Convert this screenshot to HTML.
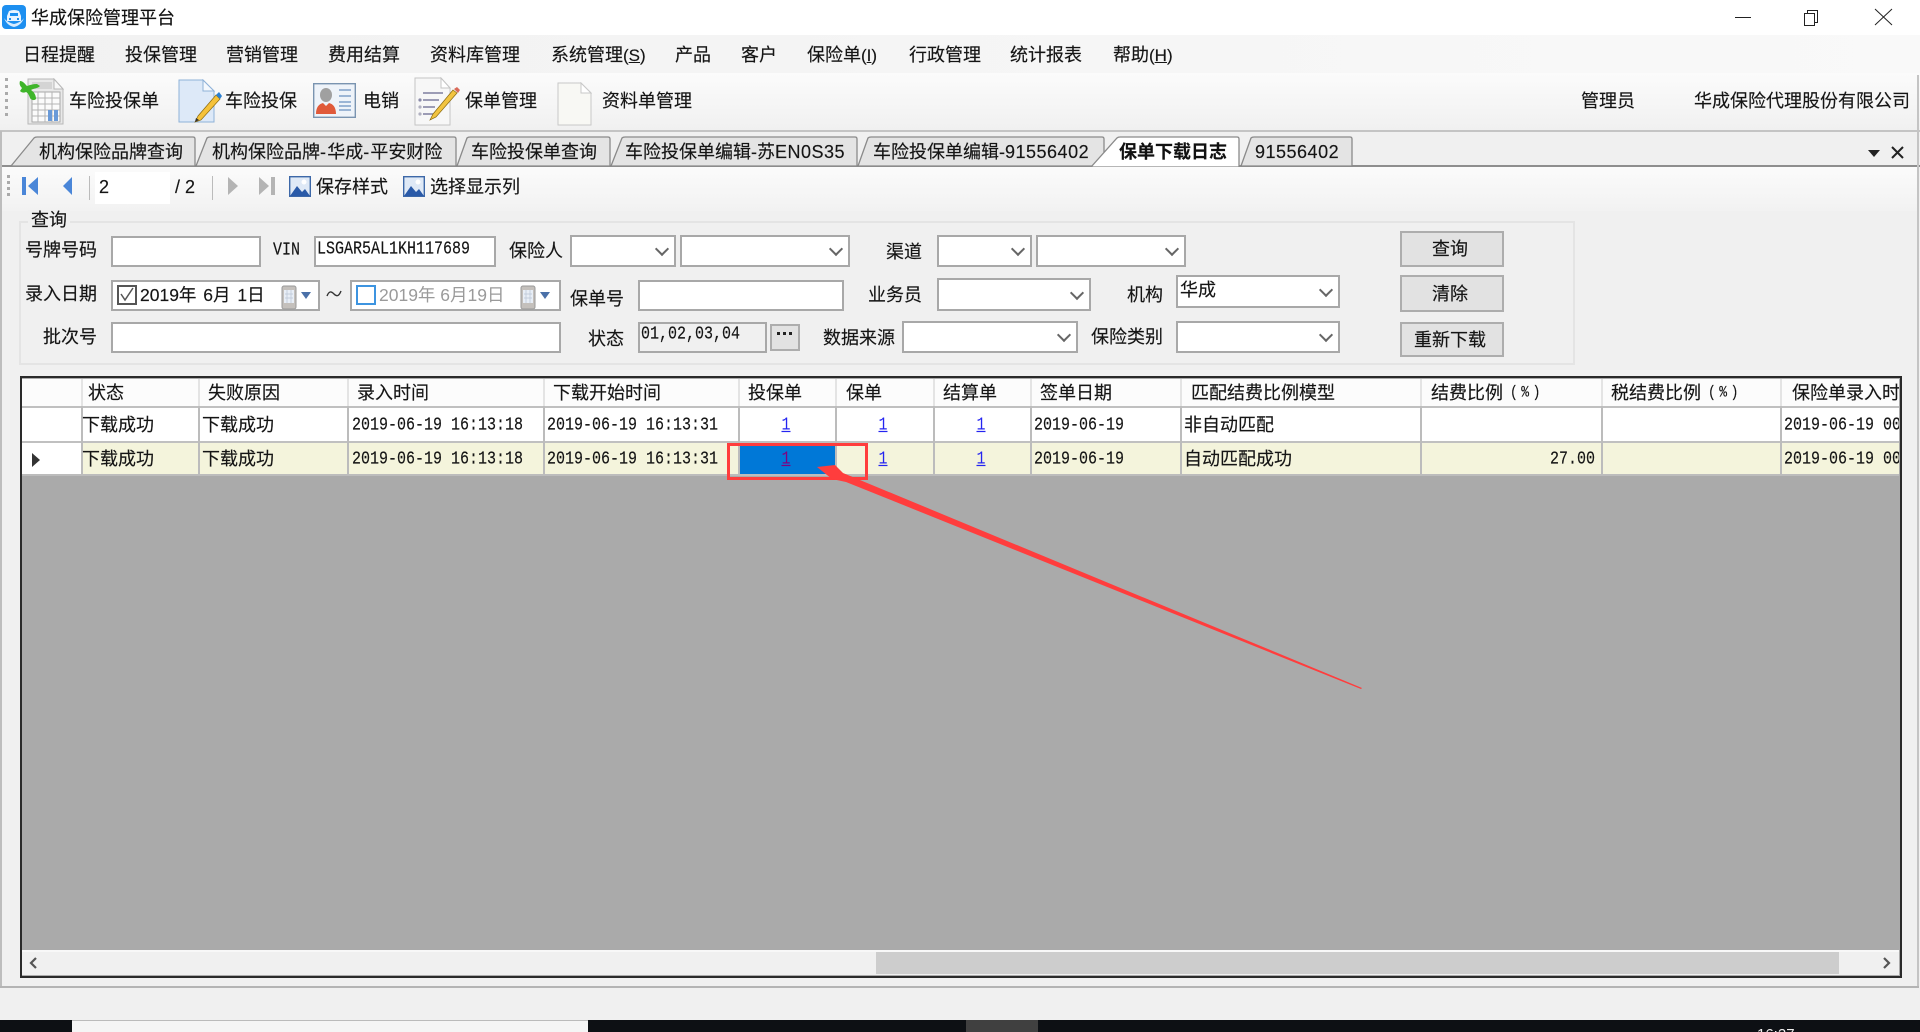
<!DOCTYPE html>
<html lang="zh">
<head>
<meta charset="utf-8">
<title>华成保险管理平台</title>
<style>
html,body{margin:0;padding:0;width:1920px;height:1032px;overflow:hidden;background:#f0f0f0}
#r{position:absolute;left:0;top:0;width:1920px;height:1032px;overflow:hidden;background:#f0f0f0;font-family:"Liberation Sans","Noto Sans CJK SC",sans-serif;font-size:18px;color:#151515;filter:blur(.35px)}
#r div,#r span,#r svg{position:absolute}
.t{white-space:nowrap;line-height:24px;height:24px;-webkit-text-stroke:.15px #151515}
.m{font-family:"Liberation Mono","Noto Sans CJK SC",monospace;font-size:15px;white-space:nowrap;line-height:20px;height:20px;color:#151515;transform:scaleY(1.22);-webkit-text-stroke:.15px #151515}
.i{background:#fff;border:2px solid #a8a8a8;box-sizing:border-box}
.c{background:#fff;border:2px solid #a8a8a8;box-sizing:border-box}
.c:after{content:"";position:absolute;right:7px;top:50%;margin-top:-7px;width:8px;height:8px;border-right:2px solid #666;border-bottom:2px solid #666;transform:rotate(45deg)}
.b{background:#e2e2e2;border:2px solid #adadad;box-sizing:border-box}
.vh{width:2px;background:#e4e4e4;top:379px;height:27px}
.v{width:2px;background:#bcbcbc;top:406px;height:69px}
.u{text-decoration:underline;color:#2424f0;text-align:center;width:20px;-webkit-text-stroke:0}
b{font-weight:normal}
.n{letter-spacing:.5px}
.h{letter-spacing:1.2px}
.p{font-size:17px}
</style>
</head>
<body>
<div id="r">
<!-- title bar -->
<div style="left:0;top:0;width:1920px;height:35px;background:#fff"></div>
<svg style="left:2px;top:5px" width="24" height="24" viewBox="0 0 24 24"><rect width="24" height="24" rx="4" fill="#1d8ff0"/><path d="M2 13c2 5 5 8 10 9 5-1 8-4 10-9-2 3-6 5-10 6-4-1-8-3-10-6z" fill="#d8ecff"/><path d="M7 6q5-2 10 0l2 5v5H5v-5z" fill="#e8f3ff"/><rect x="8" y="8" width="8" height="3" fill="#1d8ff0"/><rect x="7" y="13" width="2" height="2" fill="#1d8ff0"/><rect x="15" y="13" width="2" height="2" fill="#1d8ff0"/></svg>
<span class="t" style="left:31px;top:6px;color:#111">华成保险管理平台</span>
<svg style="left:1730px;top:5px" width="180" height="24" viewBox="0 0 180 24" fill="none" stroke="#222" stroke-width="1"><path d="M5 12.500h16"/><path d="M74.500 8.500h10v12h-10zM77.500 8.500v-3h10v12h-3"/><path d="M145 4l17 16M162 4l-17 16"/></svg>

<!-- menu -->
<div style="left:0;top:35px;width:1920px;height:38px;background:linear-gradient(90deg,#f1f1f1,#f6f6f6 60%,#f9f9f9)"></div>
<span class="t" style="left:23px;top:43px">日程提醒</span>
<span class="t" style="left:125px;top:43px">投保管理</span>
<span class="t" style="left:226px;top:43px">营销管理</span>
<span class="t" style="left:328px;top:43px">费用结算</span>
<span class="t" style="left:430px;top:43px">资料库管理</span>
<span class="t" style="left:551px;top:43px">系统管理<b class="p">(<u>S</u>)</b></span>
<span class="t" style="left:675px;top:43px">产品</span>
<span class="t" style="left:741px;top:43px">客户</span>
<span class="t" style="left:807px;top:43px">保险单<b class="p">(<u>I</u>)</b></span>
<span class="t" style="left:909px;top:43px">行政管理</span>
<span class="t" style="left:1010px;top:43px">统计报表</span>
<span class="t" style="left:1113px;top:43px">帮助<b class="p">(<u>H</u>)</b></span>

<!-- toolbar 1 -->
<div style="left:0;top:73px;width:1920px;height:59px;background:linear-gradient(#fbfbfb,#f5f5f5 60%,#f0f0f0);border-bottom:2px solid #c4c4c4;box-sizing:border-box"></div>
<div style="left:5px;top:78px;width:3px;height:40px;background:repeating-linear-gradient(#aaa 0 3px,transparent 3px 7px)"></div>
<svg style="left:18px;top:78px" width="46" height="48" viewBox="0 0 46 48"><path d="M10 1h26l9 10v35H10z" fill="#e9e9e9" stroke="#b8b8b8"/><path d="M36 1v10h9z" fill="#f8f8f8" stroke="#b8b8b8"/><rect x="14" y="4" width="20" height="7" fill="#d4d4d4"/><path d="M14 14h28v30H14z" fill="#fbfbfb" stroke="#a8a8a8"/><path d="M14 20h28M14 26h28M14 32h28M14 38h28M20 14v30M27 14v30M34 14v30" stroke="#b4b4b4" fill="none"/><path d="M2 3c3 0 5 3 7 5 3-1 6-2 10-2l3 2c-3 3-6 2-9 4 3 2 5 5 5 9-2 2-5 1-6-1-1-3-2-5-4-6-2 1-4 1-6-1l2-3C2 8 1 6 2 3z" fill="#3fb52a"/><rect x="30" y="32" width="4" height="11" fill="#6a9ad8"/><rect x="36" y="32" width="4" height="11" fill="#6a9ad8"/></svg>
<span class="t" style="left:69px;top:89px">车险投保单</span>
<svg style="left:178px;top:79px" width="44" height="45" viewBox="0 0 44 45"><path d="M1 1h24l11 11v31H1z" fill="#dde9f8" stroke="#8fb2d8"/><path d="M25 1v11h11z" fill="#f4f8fd" stroke="#8fb2d8"/><path d="M20 37l-3 6 6-2 19-21-4-4z" fill="#f5c23a" stroke="#8a6a10" stroke-width=".7"/><path d="M38 16l4 4 2-3-3-4z" fill="#2a7fd0"/><path d="M17 43l1-4 3 2z" fill="#333"/></svg>
<span class="t" style="left:225px;top:89px">车险投保</span>
<svg style="left:313px;top:83px" width="43" height="35" viewBox="0 0 43 35"><rect x=".7" y=".7" width="41.600" height="33.600" fill="#eef3f9" stroke="#7a94b0" stroke-width="1.400"/><ellipse cx="13" cy="12" rx="6" ry="7" fill="#a0a0a0"/><path d="M3 31c0-7 3-10 7-11l3 3 3-3c4 1 7 4 7 11z" fill="#e05a3a"/><path d="M26 7h12M26 13h12M26 19h12M26 23h12M26 27h12" stroke="#6a90c0" stroke-width="1.300"/></svg>
<span class="t" style="left:363px;top:89px">电销</span>
<svg style="left:414px;top:77px" width="47" height="49" viewBox="0 0 47 49"><path d="M1 1h26l9 10v37H1z" fill="#f7f7f7" stroke="#c4c4c4"/><path d="M27 1v10h9z" fill="#fff" stroke="#c4c4c4"/><path d="M9 16h20M9 23h16M9 30h12M9 37h10" stroke="#9090ac" stroke-width="1.800"/><circle cx="6" cy="23" r="1.600" fill="#8a8aa8"/><circle cx="6" cy="30" r="1.600" fill="#b0b0c0"/><circle cx="6" cy="37" r="1.600" fill="#b0b0c0"/><path d="M19 37l-3 6 6-3 21-24-4-3z" fill="#f2c440" stroke="#8a6a10" stroke-width=".7"/><path d="M40 12l4 4 2-3-3-3z" fill="#d96a5a"/></svg>
<span class="t" style="left:465px;top:89px">保单管理</span>
<svg style="left:557px;top:82px" width="35" height="44" viewBox="0 0 35 44"><path d="M1 1h23l10 10v32H1z" fill="#f8f8f4" stroke="#c8c8c8"/><path d="M24 1v10h10z" fill="#fff" stroke="#c8c8c8"/></svg>
<span class="t" style="left:602px;top:89px">资料单管理</span>
<span class="t" style="left:1581px;top:89px">管理员</span>
<span class="t" style="left:1694px;top:89px">华成保险代理股份有限公司</span>

<!-- tabs -->
<div style="left:0;top:132px;width:1920px;height:35px;background:#f0f0f0;border-bottom:2px solid #8e8e8e;box-sizing:border-box"></div>
<svg style="left:0;top:131px" width="1400" height="36" viewBox="0 0 1400 36" fill="#e4e4e4" stroke="#8a8a8a" stroke-width="1.300">
<path d="M11 35L34 7q1-1 3-1H193q2 0 2 2V35z"/>
<path d="M196 35L207 7q1-1 3-1H454q2 0 2 2V35z"/>
<path d="M457 35L467 7q1-1 3-1H608q2 0 2 2V35z"/>
<path d="M611 35L622 7q1-1 3-1H855q2 0 2 2V35z"/>
<path d="M858 35L868 7q1-1 3-1H1102q2 0 2 2V35z"/>
<path d="M1241 35L1251 7q1-1 3-1H1350q2 0 2 2V35z"/>
<path d="M1091 36L1117 7q1-1 3-1H1237q2 0 2 2V36z" fill="#fff"/>
</svg>
<span class="t" style="left:39px;top:140px">机构保险品牌查询</span>
<span class="t" style="left:212px;top:140px">机构保险品牌<b class="h">-</b>华成<b class="h">-</b>平安财险</span>
<span class="t" style="left:471px;top:140px">车险投保单查询</span>
<span class="t" style="left:625px;top:140px">车险投保单编辑-苏<b class="n">EN0S35</b></span>
<span class="t" style="left:873px;top:140px">车险投保单编辑-<b class="n">91556402</b></span>
<span class="t" style="left:1119px;top:140px;font-weight:700;color:#111">保单下载日志</span>
<span class="t" style="left:1255px;top:140px"><b class="n">91556402</b></span>
<svg style="left:1866px;top:145px" width="44" height="16" viewBox="0 0 44 16"><path d="M2 5h12l-6 7z" fill="#222"/><path d="M26 2l11 11M37 2L26 13" stroke="#222" stroke-width="2" fill="none"/></svg>

<!-- toolbar 2 -->
<div style="left:2px;top:167px;width:1916px;height:44px;background:linear-gradient(#fbfbfb,#f2f2f2)"></div>
<div style="left:7px;top:175px;width:3px;height:22px;background:repeating-linear-gradient(#aaa 0 3px,transparent 3px 6px)"></div>
<svg style="left:20px;top:175px" width="60" height="22" viewBox="0 0 60 22"><rect x="2" y="2" width="4" height="18" fill="#4a86d8"/><path d="M18 2v18L8 11z" fill="#4a86d8"/><path d="M52 2v18L43 11z" fill="#4a86d8"/></svg>
<div style="left:89px;top:176px;width:1px;height:24px;background:#bbb"></div>
<div style="left:95px;top:172px;width:75px;height:32px;background:#fff"></div>
<span class="t" style="left:99px;top:175px">2</span>
<span class="t" style="left:175px;top:175px">/ 2</span>
<div style="left:212px;top:176px;width:1px;height:24px;background:#bbb"></div>
<svg style="left:226px;top:175px" width="52" height="22" viewBox="0 0 52 22"><path d="M2 2v18l10-9z" fill="#b4b4b4"/><path d="M33 2v18l10-9z" fill="#b4b4b4"/><rect x="45" y="2" width="4" height="18" fill="#b4b4b4"/></svg>
<svg style="left:289px;top:176px" width="22" height="21" viewBox="0 0 22 21"><rect x=".7" y=".7" width="20.600" height="19.600" fill="#dfe9f6" stroke="#3d68a8" stroke-width="1.400"/><path d="M1 20l7-10 5 6 3-3 5 7z" fill="#2a5aa8"/><circle cx="15" cy="6" r="2.500" fill="#fff"/></svg>
<span class="t" style="left:316px;top:175px">保存样式</span>
<svg style="left:403px;top:176px" width="22" height="21" viewBox="0 0 22 21"><rect x=".7" y=".7" width="20.600" height="19.600" fill="#dfe9f6" stroke="#3d68a8" stroke-width="1.400"/><path d="M1 20l7-10 5 6 3-3 5 7z" fill="#2a5aa8"/><circle cx="15" cy="6" r="2.500" fill="#fff"/></svg>
<span class="t" style="left:430px;top:175px">选择显示列</span>

<!-- outer panel lines -->
<div style="left:0;top:131px;width:2px;height:857px;background:#bdbdbd"></div>
<div style="left:1917px;top:75px;width:2px;height:913px;background:#c4c4c4"></div>
<div style="left:0;top:986px;width:1919px;height:2px;background:#b4b4b4"></div>

<!-- query group -->
<div style="left:19px;top:221px;width:1556px;height:144px;border:2px solid #e4e4e4;box-sizing:border-box"></div>
<div style="left:28px;top:210px;width:42px;height:20px;background:#f0f0f0"></div>
<span class="t" style="left:31px;top:208px">查询</span>

<span class="t" style="left:25px;top:238px">号牌号码</span>
<div class="i" style="left:111px;top:236px;width:150px;height:31px"></div>
<span class="m" style="left:273px;top:241px">VIN</span>
<div class="i" style="left:314px;top:236px;width:182px;height:31px"></div>
<span class="m" style="left:317px;top:240px">LSGAR5AL1KH117689</span>
<span class="t" style="left:509px;top:239px">保险人</span>
<div class="c" style="left:570px;top:235px;width:106px;height:32px"></div>
<div class="c" style="left:680px;top:235px;width:170px;height:32px"></div>
<span class="t" style="left:886px;top:240px">渠道</span>
<div class="c" style="left:937px;top:235px;width:95px;height:32px"></div>
<div class="c" style="left:1036px;top:235px;width:150px;height:32px"></div>
<div class="b" style="left:1400px;top:231px;width:104px;height:36px"></div>
<span class="t" style="left:1432px;top:237px">查询</span>

<span class="t" style="left:25px;top:282px">录入日期</span>
<div class="i" style="left:111px;top:280px;width:209px;height:31px"></div>
<div style="left:117px;top:285px;width:20px;height:20px;border:2px solid #555;box-sizing:border-box;background:#fff"></div>
<svg style="left:119px;top:287px" width="16" height="16" viewBox="0 0 16 16"><path d="M2 7l4 6 8-12" stroke="#555" stroke-width="1.500" fill="none"/></svg>
<span class="t" style="left:140px;top:283px;font-size:17.500px;white-space:pre;word-spacing:2px">2019年 6月 1日</span>
<svg style="left:281px;top:285px" width="30" height="25" viewBox="0 0 30 25"><rect x="1" y="1" width="14" height="23" rx="2" fill="#c4c0bc" stroke="#999"/><rect x="3" y="5" width="10" height="13" fill="#e8eef6"/><path d="M4 9h8M4 13h8M6 5v13M10 5v13" stroke="#b8c4d4" stroke-width=".7"/><path d="M20 7h10l-5 7z" fill="#4a70a8"/></svg>
<svg style="left:326px;top:287px" width="16" height="14" viewBox="0 0 16 14"><path d="M1 9c2-5 4-5 7-2s5 2 7-3" stroke="#333" stroke-width="1.400" fill="none"/></svg>
<div class="i" style="left:350px;top:280px;width:211px;height:31px"></div>
<div style="left:356px;top:285px;width:20px;height:20px;border:2px solid #3d94e0;box-sizing:border-box;background:#fff"></div>
<span class="t" style="left:379px;top:283px;font-size:17.500px;color:#9a9a9a;white-space:pre;-webkit-text-stroke:0">2019年 6月19日</span>
<svg style="left:520px;top:285px" width="30" height="25" viewBox="0 0 30 25"><rect x="1" y="1" width="14" height="23" rx="2" fill="#c4c0bc" stroke="#999"/><rect x="3" y="5" width="10" height="13" fill="#e8eef6"/><path d="M4 9h8M4 13h8M6 5v13M10 5v13" stroke="#b8c4d4" stroke-width=".7"/><path d="M20 7h10l-5 7z" fill="#4a70a8"/></svg>
<span class="t" style="left:570px;top:287px">保单号</span>
<div class="i" style="left:638px;top:280px;width:206px;height:31px"></div>
<span class="t" style="left:868px;top:283px">业务员</span>
<div class="c" style="left:937px;top:278px;width:154px;height:33px"></div>
<span class="t" style="left:1127px;top:283px">机构</span>
<div class="c" style="left:1176px;top:275px;width:164px;height:33px"></div>
<span class="t" style="left:1180px;top:278px">华成</span>
<div class="b" style="left:1400px;top:275px;width:104px;height:37px"></div>
<span class="t" style="left:1432px;top:282px">清除</span>

<span class="t" style="left:43px;top:325px">批次号</span>
<div class="i" style="left:111px;top:322px;width:450px;height:31px"></div>
<span class="t" style="left:588px;top:327px">状态</span>
<div class="i" style="left:638px;top:322px;width:129px;height:31px;background:#f0f0f0"></div>
<span class="m" style="left:641px;top:325px">01,02,03,04</span>
<div class="b" style="left:770px;top:324px;width:30px;height:27px"></div>
<svg style="left:776px;top:331px" width="18" height="6" viewBox="0 0 18 6" fill="#222"><rect x="1" y="1" width="3" height="3"/><rect x="7" y="1" width="3" height="3"/><rect x="13" y="1" width="3" height="3"/></svg>
<span class="t" style="left:823px;top:326px">数据来源</span>
<div class="c" style="left:902px;top:321px;width:176px;height:32px"></div>
<span class="t" style="left:1091px;top:325px">保险类别</span>
<div class="c" style="left:1176px;top:321px;width:164px;height:32px"></div>
<div class="b" style="left:1400px;top:322px;width:104px;height:35px"></div>
<span class="t" style="left:1414px;top:328px">重新下载</span>

<!-- grid -->
<div style="left:20px;top:376px;width:1882px;height:602px;background:#aaa;border:2px solid #2a2a2a;box-sizing:border-box"></div>
<div style="left:22px;top:379px;width:1877px;height:27px;background:#fcfcfc"></div>
<div style="left:22px;top:406px;width:1877px;height:2px;background:#c0c0c0"></div>
<div style="left:22px;top:408px;width:1877px;height:33px;background:#fff"></div>
<div style="left:22px;top:441px;width:1877px;height:2px;background:#c0c0c0"></div>
<div style="left:22px;top:443px;width:60px;height:32px;background:#fff"></div>
<div style="left:82px;top:443px;width:1817px;height:32px;background:#f4f4dc"></div>
<div style="left:22px;top:474px;width:1877px;height:2px;background:#bcbcbc"></div>
<div style="left:739px;top:444px;width:97px;height:30px;background:#0078d7"></div>

<div class="vh" style="left:81px"></div><div class="vh" style="left:198px"></div><div class="vh" style="left:347px"></div><div class="vh" style="left:543px"></div><div class="vh" style="left:738px"></div><div class="vh" style="left:835px"></div><div class="vh" style="left:933px"></div><div class="vh" style="left:1030px"></div><div class="vh" style="left:1180px"></div><div class="vh" style="left:1420px"></div><div class="vh" style="left:1601px"></div><div class="vh" style="left:1780px"></div>
<div class="v" style="left:81px"></div><div class="v" style="left:198px"></div><div class="v" style="left:347px"></div><div class="v" style="left:543px"></div><div class="v" style="left:738px"></div><div class="v" style="left:835px"></div><div class="v" style="left:933px"></div><div class="v" style="left:1030px"></div><div class="v" style="left:1180px"></div><div class="v" style="left:1420px"></div><div class="v" style="left:1601px"></div><div class="v" style="left:1780px"></div>

<span class="t" style="left:88px;top:381px">状态</span>
<span class="t" style="left:208px;top:381px">失败原因</span>
<span class="t" style="left:357px;top:381px">录入时间</span>
<span class="t" style="left:553px;top:381px">下载开始时间</span>
<span class="t" style="left:748px;top:381px">投保单</span>
<span class="t" style="left:846px;top:381px">保单</span>
<span class="t" style="left:943px;top:381px">结算单</span>
<span class="t" style="left:1040px;top:381px">签单日期</span>
<span class="t" style="left:1191px;top:381px">匹配结费比例模型</span>
<span class="t" style="left:1431px;top:381px">结费比例</span>
<span class="m" style="left:1510px;top:383px;font-size:13px;letter-spacing:3.500px">(%)</span>
<span class="t" style="left:1611px;top:381px">税结费比例</span>
<span class="m" style="left:1708px;top:383px;font-size:13px;letter-spacing:3.500px">(%)</span>
<div style="left:1792px;top:381px;width:107px;height:24px;overflow:hidden"><span class="t" style="left:0;top:0">保险单录入时间</span></div>

<span class="t" style="left:82px;top:413px">下载成功</span>
<span class="t" style="left:202px;top:413px">下载成功</span>
<span class="m" style="left:352px;top:416px">2019-06-19 16:13:18</span>
<span class="m" style="left:547px;top:416px">2019-06-19 16:13:31</span>
<span class="m u" style="left:776px;top:416px">1</span>
<span class="m u" style="left:873px;top:416px">1</span>
<span class="m u" style="left:971px;top:416px">1</span>
<span class="m" style="left:1034px;top:416px">2019-06-19</span>
<span class="t" style="left:1184px;top:413px">非自动匹配</span>
<div style="left:1784px;top:411px;width:115px;height:28px;overflow:hidden"><span class="m" style="left:0;top:5px">2019-06-19 00:00:00</span></div>

<span class="t" style="left:82px;top:447px">下载成功</span>
<span class="t" style="left:202px;top:447px">下载成功</span>
<span class="m" style="left:352px;top:450px">2019-06-19 16:13:18</span>
<span class="m" style="left:547px;top:450px">2019-06-19 16:13:31</span>
<span class="m u" style="left:776px;top:450px;color:#800080">1</span>
<span class="m u" style="left:873px;top:450px">1</span>
<span class="m u" style="left:971px;top:450px">1</span>
<span class="m" style="left:1034px;top:450px">2019-06-19</span>
<span class="t" style="left:1184px;top:447px">自动匹配成功</span>
<span class="m" style="left:1550px;top:450px">27.00</span>
<div style="left:1784px;top:445px;width:115px;height:28px;overflow:hidden"><span class="m" style="left:0;top:5px">2019-06-19 00:00:00</span></div>
<svg style="left:31px;top:452px" width="10" height="16" viewBox="0 0 10 16"><path d="M1 1l8 7-8 7z" fill="#333"/></svg>

<!-- scrollbar -->
<div style="left:22px;top:950px;width:1877px;height:2px;background:#f8f8f8"></div>
<div style="left:22px;top:952px;width:1877px;height:23px;background:#f0f0f0"></div>
<div style="left:876px;top:952px;width:963px;height:22px;background:#cdcdcd"></div>
<svg style="left:28px;top:956px" width="10" height="14" viewBox="0 0 10 14"><path d="M8 2L3 7l5 5" stroke="#555" stroke-width="2.200" fill="none"/></svg>
<svg style="left:1882px;top:956px" width="10" height="14" viewBox="0 0 10 14"><path d="M2 2l5 5-5 5" stroke="#555" stroke-width="2.200" fill="none"/></svg>

<!-- annotation -->
<div style="left:727px;top:443px;width:141px;height:37px;border:3px solid #ff3d3d;box-sizing:border-box"></div>
<svg style="left:0;top:0" width="1920" height="1032" viewBox="0 0 1920 1032"><path d="M817 467L835 465L843 473L1362 688L1361 689L846 482L832 479z" fill="#ff3d3d"/></svg>

<!-- taskbar -->
<div style="left:0;top:1020px;width:1920px;height:12px;background:#0d1014"></div>
<div style="left:72px;top:1020px;width:516px;height:12px;background:#f5f5f5;border-top:1px solid #bbb;box-sizing:border-box"></div>
<div style="left:966px;top:1020px;width:72px;height:12px;background:#404040"></div>
<span style="left:1757px;top:1026px;font-size:15px;line-height:18px;color:#eee;white-space:nowrap">16:27</span>
</div>
</body>
</html>
